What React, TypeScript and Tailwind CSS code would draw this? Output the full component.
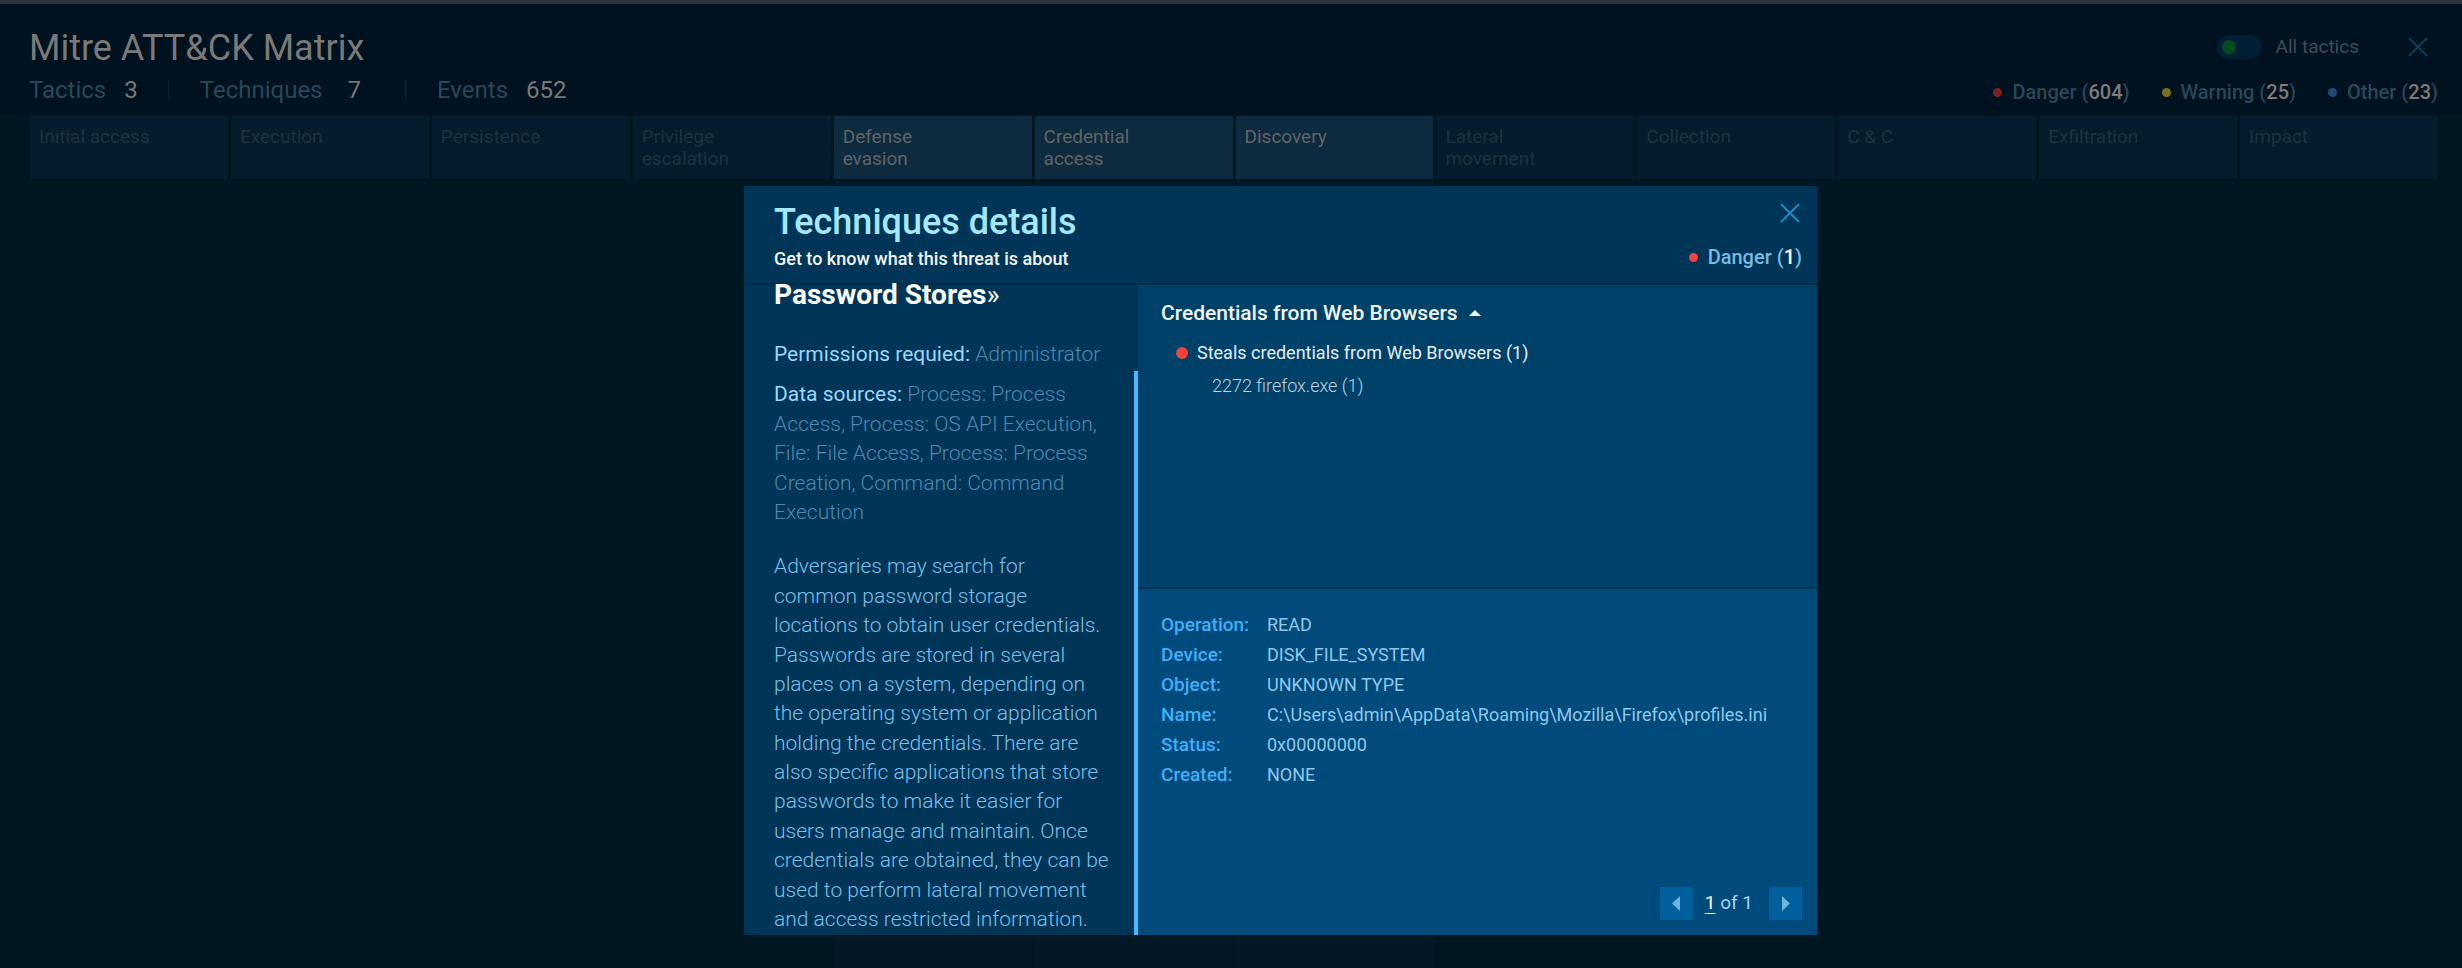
import React from "react";

const tactics = [
  { name: "Initial access", active: false },
  { name: "Execution", active: false },
  { name: "Persistence", active: false },
  { name: "Privilege escalation", active: false },
  { name: "Defense evasion", active: true },
  { name: "Credential access", active: true },
  { name: "Discovery", active: true },
  { name: "Lateral movement", active: false },
  { name: "Collection", active: false },
  { name: "C & C", active: false },
  { name: "Exfiltration", active: false },
  { name: "Impact", active: false },
];

const legend = [
  { name: "Danger", count: 604, dot: "bg-[#7a2020]" },
  { name: "Warning", count: 25, dot: "bg-[#7b701d]" },
  { name: "Other", count: 23, dot: "bg-[#1e4a7a]" },
];

const details = [
  ["Operation:", "READ"],
  ["Device:", "DISK_FILE_SYSTEM"],
  ["Object:", "UNKNOWN TYPE"],
  ["Name:", "C:\\Users\\admin\\AppData\\Roaming\\Mozilla\\Firefox\\profiles.ini"],
  ["Status:", "0x00000000"],
  ["Created:", "NONE"],
];

function CloseIcon() {
  return (
    <svg viewBox="0 0 20 20" className="size-5" fill="none" stroke="currentColor" strokeWidth="2" aria-hidden="true">
      <path d="M1 1 19 19M19 1 1 19" />
    </svg>
  );
}

function MatrixHeader() {
  return (
    <header className="flex h-[111px] justify-between bg-[#00111f] pr-6 pl-[29px]">
      <div className="pt-[21px]">
        <h1 className="text-[36px] leading-[46px] text-[#7b7977]">Mitre ATT&amp;CK Matrix</h1>
        <dl className="flex items-center pt-[2px] text-[24px] leading-[34px] text-[#2b475a]">
          <dt>Tactics</dt>
          <dd className="ml-[18px] text-[#787878]">3</dd>
          <div className="mr-[31px] ml-[30px] h-5 w-px bg-[#0e2634]" />
          <dt>Techniques</dt>
          <dd className="ml-[25px] text-[#787878]">7</dd>
          <div className="mr-[31px] ml-11 h-5 w-px bg-[#0e2634]" />
          <dt>Events</dt>
          <dd className="ml-[18px] text-[#787878]">652</dd>
        </dl>
      </div>
      <div className="flex flex-col items-end pt-[19px]">
        <div className="flex h-12 items-center pr-[10px]">
          <label className="flex items-center gap-[14px] text-[19px] text-[#414c55]">
            <input
              type="checkbox"
              className="h-6 w-[45px] appearance-none rounded-full bg-[#001f35] p-[5px] before:block before:size-[14px] before:rounded-full before:bg-[#034a1e]"
            />
            All tactics
          </label>
          <button type="button" aria-label="Close matrix" className="ml-[49px] text-[#0e3d55]">
            <CloseIcon />
          </button>
        </div>
        <ul className="flex gap-8 pt-[5px] text-[20px] leading-8 font-medium text-[#2b475a]">
          {legend.map((item) => (
            <li key={item.name} className="flex items-center gap-[10px]">
              <span className={"size-[9px] rounded-full " + item.dot} />
              <span>
                {item.name} (<span className="text-[#7d7a78]">{item.count}</span>)
              </span>
            </li>
          ))}
        </ul>
      </div>
    </header>
  );
}

function TacticGrid() {
  return (
    <ul className="grid flex-1 grid-cols-12 gap-[3px] pt-px pr-6 pl-[30px]">
      {tactics.map((tactic) => (
        <li key={tactic.name} className={tactic.active ? "bg-[#031824]" : ""}>
          <h2
            className={
              "h-[63px] pt-[10px] pr-16 pl-[9px] text-[19px] leading-[22px] " +
              (tactic.active ? "bg-[#0e2a3e] text-[#5f6467]" : "bg-[#061c2d] text-[#1e313c]")
            }
          >
            {tactic.name}
          </h2>
        </li>
      ))}
    </ul>
  );
}

function TechniqueInfo() {
  return (
    <section className="flex w-[394px] shrink-0">
      <div className="flex-1 pl-[30px] text-[21px] leading-[1.4] font-light text-[#7cc0ea]">
        <h3 className="text-[28px] leading-5 font-bold text-white">
          Password Stores<span className="font-normal">»</span>
        </h3>
        <p className="mt-[35px] text-[#5288ad]">
          <b className="font-normal text-[#9bd8f8]">Permissions requied:</b> Administrator
        </p>
        <p className="mt-[11px] text-[#5288ad]">
          <b className="font-normal text-[#9bd8f8]">Data sources:</b> Process: Process Access, Process: OS API
          Execution, File: File Access, Process: Process Creation, Command: Command Execution
        </p>
        <p className="mt-[25px]">
          Adversaries may search for common password storage locations to obtain user credentials. Passwords are
          stored in several places on a system, depending on the operating system or application holding the
          credentials. There are also specific applications that store passwords to make it easier for users manage
          and maintain. Once credentials are obtained, they can be used to perform lateral movement and access
          restricted information.
        </p>
      </div>
      <div className="ml-6 flex w-1 flex-col pt-[86px]">
        <div className="flex-1 bg-[#4bb9fb]" />
      </div>
    </section>
  );
}

function EventTree() {
  return (
    <section className="h-[302px] bg-[#004169] pt-3 pl-[23px]">
      <button type="button" className="flex items-center gap-[11px] text-[21px] leading-8 font-medium text-[#f2f6f9]">
        Credentials from Web Browsers
        <svg viewBox="0 0 12 6" className="h-[6px] w-3" fill="currentColor" aria-hidden="true">
          <path d="M6 0 12 6H0Z" />
        </svg>
      </button>
      <div className="flex items-center gap-[9px] pt-2 pl-[15px] text-[18px] leading-8 text-[#e6eef3]">
        <span className="size-3 rounded-full bg-[#ef443f]" />
        Steals credentials from Web Browsers (1)
      </div>
      <div className="pl-[51px] text-[18px] leading-[34px] font-light text-[#bdd2df]">2272 firefox.exe (1)</div>
    </section>
  );
}

function EventDetails() {
  return (
    <section className="flex flex-1 flex-col justify-between border-t-2 border-[#003153] bg-[#004a7c] px-[23px] pt-[21px] pb-[15px]">
      <table className="text-left text-[18px] leading-[30px]">
        <tbody>
          {details.map(([label, value]) => (
            <tr key={label}>
              <th scope="row" className="w-[106px] p-0 text-[19px] leading-[30px] font-medium text-[#3fb0f8]">
                {label}
              </th>
              <td className="p-0 text-[#8fc8ea]">{value}</td>
            </tr>
          ))}
        </tbody>
      </table>
      <nav aria-label="Event pages" className="-mr-2 flex items-center justify-end text-[19px] text-[#a6d3ee]">
        <button type="button" aria-label="Previous" className="flex size-[33px] items-center justify-center bg-[#00609c]">
          <svg viewBox="0 0 8 15" className="h-[15px] w-2" fill="#6fb4de" aria-hidden="true">
            <path d="M8 0V15L0 7.500Z" />
          </svg>
        </button>
        <span className="pr-4 pl-3">
          <span className="text-white underline underline-offset-4">1</span> of 1
        </span>
        <button type="button" aria-label="Next" className="flex size-[33px] items-center justify-center bg-[#00609c]">
          <svg viewBox="0 0 8 15" className="h-[15px] w-2" fill="#6fb4de" aria-hidden="true">
            <path d="M0 0V15L8 7.500Z" />
          </svg>
        </button>
      </nav>
    </section>
  );
}

function TechniquesDialog() {
  return (
    <div
      role="dialog"
      aria-labelledby="dialog-title"
      className="flex w-full max-w-[1073px] flex-col overflow-hidden bg-[#003558]"
    >
      <header className="flex h-[99px] shrink-0 justify-between border-b-2 border-[#002a48] pt-[13px] pr-[15px] pl-[30px]">
        <div>
          <h2 id="dialog-title" className="text-[36px] leading-[46px] font-medium text-[#a5e8f8]">
            Techniques details
          </h2>
          <p className="text-[18px] leading-7 font-medium text-[#f2f6f9]">Get to know what this threat is about</p>
        </div>
        <div className="flex flex-col items-end">
          <button type="button" aria-label="Close details" className="mt-1 mr-[2px] text-[#2488c4]">
            <CloseIcon />
          </button>
          <div className="flex items-center gap-[10px] pt-5 text-[20px] leading-7 font-medium text-[#79b9e2]">
            <span className="size-[9px] rounded-full bg-[#ef443f]" />
            <span>
              Danger (<span className="text-white">1</span>)
            </span>
          </div>
        </div>
      </header>
      <div className="flex min-h-0 flex-1">
        <TechniqueInfo />
        <div className="flex min-w-0 flex-1 flex-col">
          <EventTree />
          <EventDetails />
        </div>
      </div>
    </div>
  );
}

export default function App() {
  return (
    <div className="relative flex min-h-screen flex-col border-t-4 border-[#2f333d] bg-[#001722] font-[Roboto,sans-serif]">
      <MatrixHeader />
      <TacticGrid />
      <div className="absolute inset-x-0 -top-1 bottom-0 flex justify-center pt-[186px] pb-[33px] pl-[99px]">
        <TechniquesDialog />
      </div>
    </div>
  );
}
